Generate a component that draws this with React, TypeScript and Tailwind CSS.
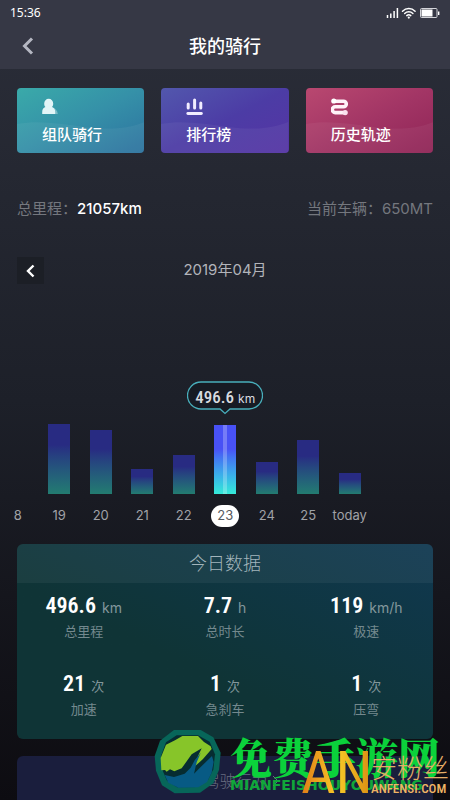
import { clsx } from "clsx";

interface Day {
  label: string;
  height: number;
  active?: boolean;
}

interface Stat {
  value: string;
  unit: string;
  label: string;
}

const days: Day[] = [
  { label: "8", height: 0 },
  { label: "19", height: 70 },
  { label: "20", height: 64 },
  { label: "21", height: 25 },
  { label: "22", height: 39 },
  { label: "23", height: 69, active: true },
  { label: "24", height: 32 },
  { label: "25", height: 54 },
  { label: "today", height: 21 },
];

const stats: Stat[] = [
  { value: "496.6", unit: "km", label: "总里程" },
  { value: "7.7", unit: "h", label: "总时长" },
  { value: "119", unit: "km/h", label: "极速" },
  { value: "21", unit: "次", label: "加速" },
  { value: "1", unit: "次", label: "急刹车" },
  { value: "1", unit: "次", label: "压弯" },
];

function StatusIcons() {
  return (
    <svg width="54" height="12" viewBox="0 0 54 12" fill="none" aria-hidden="true">
      <g stroke="#fff" strokeWidth="1.5">
        <path d="M1.500 8v3M4.800 6.500V11M8.100 4V11M11.400 1V11" />
      </g>
      <g stroke="#fff" strokeWidth="1.500" strokeLinecap="round">
        <path d="M16.500 4.200c3.600-3.500 9-3.500 12.600 0M18.700 6.500c2.300-2.200 5.900-2.200 8.200 0M20.800 8.600c1.200-1.100 2.800-1.100 4 0" />
      </g>
      <circle cx="22.800" cy="10.600" r="1.100" fill="#fff" />
      <rect x="34.500" y="1.500" width="16.500" height="9" rx="1" stroke="#d4d5da" />
      <rect x="35.500" y="2.500" width="11" height="7" fill="#fff" />
      <path d="M52.700 4.500v3.500" stroke="#fff" strokeWidth="1.400" />
    </svg>
  );
}

function TeamIcon() {
  return (
    <svg width="18" height="18" viewBox="0 0 18 18" aria-hidden="true">
      <path d="M10 9.500c3.500 .5 5.300 3 5.800 6.500H9z" fill="#fff" opacity=".35" />
      <path
        d="M6.700.8a4.500 4.500 0 0 1 4.500 4.600c0 1.400-.3 2.500-1.200 3.500 2.100.8 3.200 2.400 3.200 5V16H.2v-2.100c0-2.600 1.100-4.200 3.200-5-.9-1-1.200-2.100-1.200-3.500A4.500 4.500 0 0 1 6.700.8z"
        fill="#e2f5f7"
      />
    </svg>
  );
}

function RankIcon() {
  return (
    <svg width="18" height="18" viewBox="0 0 18 18" fill="none" stroke="#f1edff" strokeLinecap="round" aria-hidden="true">
      <path d="M2.200 6v4M8.600 2v8M14.800 5v5" strokeWidth="3" />
      <path d="M1.800 15.500h13.600" strokeWidth="2.800" />
    </svg>
  );
}

function TrackIcon() {
  return (
    <svg width="18" height="18" viewBox="0 0 18 18" fill="none" aria-hidden="true">
      <path
        d="M3 3.200h9.500a2.800 2.800 0 0 1 0 5.600H4.200a2.900 2.900 0 0 0 0 5.800H14"
        stroke="#fff2f8"
        strokeWidth="3.600"
        strokeLinecap="round"
      />
      <circle cx="2.800" cy="3" r="2.600" fill="#fff" />
      <circle cx="14.200" cy="14.600" r="2.600" fill="#fbe0ee" />
    </svg>
  );
}

const shortcuts = [
  { label: "组队骑行", icon: <TeamIcon />, bg: "from-[#3aaaa9] via-[#3590a8] to-[#2d729f]" },
  { label: "排行榜", icon: <RankIcon />, bg: "from-[#5257ad] via-[#4c3ca5] to-[#5534a4]" },
  { label: "历史轨迹", icon: <TrackIcon />, bg: "from-[#b94870] via-[#a23565] to-[#8f2456]" },
];

function Shortcut({ label, icon, bg }: (typeof shortcuts)[number]) {
  return (
    <button
      className={clsx("relative flex h-[65px] flex-col items-start overflow-hidden rounded bg-linear-to-br pt-[10px] pl-[25px] text-left", bg)}
    >
      <svg
        className="absolute inset-x-0 bottom-0 h-8 w-full"
        viewBox="0 0 128 32"
        preserveAspectRatio="none"
        aria-hidden="true"
      >
        <path d="M0 3C22-1 44 3 68 6s42 2 60-5v32H0z" fill="#fff" opacity=".05" />
      </svg>
      {icon}
      <span className="relative mt-2 text-[15px] leading-[22px] font-medium text-white">{label}</span>
    </button>
  );
}

function Bubble() {
  return (
    <div className="absolute bottom-full left-1/2 mb-[10px] h-[34px] w-[76px] -translate-x-1/2">
      <svg className="absolute inset-0" width="76" height="34" viewBox="0 0 76 34" fill="none" aria-hidden="true">
        <path
          d="M14 1h48a13.500 13.500 0 0 1 0 27H43l-5 4.500-5-4.500H14A13.500 13.500 0 0 1 14 1z"
          fill="#171b24"
          stroke="#48aebb"
          strokeWidth="1.300"
        />
      </svg>
      <div className="relative flex h-8 items-baseline justify-center gap-1 text-[#d9dce0]">
        <span className="font-['Roboto_Condensed',Roboto,sans-serif] text-[17px] leading-8 font-medium">496.6</span>
        <span className="text-[12px]">km</span>
      </div>
    </div>
  );
}

function DayColumn({ label, height, active }: Day) {
  return (
    <div className="flex flex-col items-center justify-end">
      <div
        className={clsx(
          "relative w-[22px] bg-linear-to-b",
          active ? "from-[#4851f5] from-35% to-[#35ead8]" : "from-[#282b82] from-30% to-[#237c70]",
        )}
        style={{ height }}
      >
        {active && (
          <>
            <div className="mx-auto h-full w-1 bg-white/25" />
            <Bubble />
          </>
        )}
      </div>
      <span
        className={clsx(
          "mt-[11px] flex h-[22px] items-center rounded-full text-[13px]",
          active ? "bg-white px-[6px] text-[#555a61]" : "text-[#a0a2a7]",
        )}
      >
        {label}
      </span>
    </div>
  );
}

function Watermark() {
  return (
    <div className="pointer-events-none absolute inset-x-0 bottom-0 h-[71px] overflow-hidden whitespace-nowrap">
      <svg className="absolute top-0 left-[154px]" width="68" height="66" viewBox="460 25 204 198" aria-hidden="true">
        <path
          d="M520 28h80l38 22 22 46-5 52-17 40-40 28-76 2-38-24-18-44-4-44 16-46z"
          fill="#076659"
        />
        <path d="M528 44h64l35 19 16 38-5 45-15 30-32 23-62 1-30-20-15-35-3-39 15-41z" fill="#062c31" />
        <path
          d="M545 46h47l18 18 20 13 3 8-26 30-24 22 6-24 14-30-30 18-30 42-22 9-13-6-10 7-5-5-11 1-2-37 16-40 27-13z"
          fill="#87c529"
        />
        <path
          d="M492 163l28 6 32-10 18-18 12-22 18-22-12 28-8 34 20-20 34-33 5 18-6 32-14 28-26 16-60 1-30-15z"
          fill="#075a84"
        />
      </svg>
      <div className="absolute top-0 left-[230px] font-['Noto_Serif_CJK_SC','Noto_Sans_CJK_SC',sans-serif] text-[42px] leading-[54px] font-black text-[#0bd23b]">
        免费手游网
      </div>
      <div className="absolute top-[46px] left-[230px] font-['DejaVu_Sans',sans-serif] text-[14px] leading-5 font-bold text-[#10a83a]">
        MIANFEISHOUYOUWANG
      </div>
      <div className="absolute top-[17px] left-[301px] bg-linear-to-r from-[#df7b17] via-[#f7c927] to-[#d98b12] bg-clip-text font-['Roboto_Condensed',Roboto,sans-serif] text-[60px] leading-[54px] text-transparent">
        AN
      </div>
      <div className="absolute top-[23px] left-[371px] font-['Noto_Sans_CJK_SC',sans-serif] text-[26px] leading-[30px] font-light text-[#e5ad68]">
        安粉丝
      </div>
      <div className="absolute top-[50px] left-[371px] font-['Roboto_Condensed',Roboto,sans-serif] text-[13px] leading-5 font-medium text-[#efb465]">
        ANFENSI.COM
      </div>
    </div>
  );
}

export default function App() {
  return (
    <div className="relative h-screen overflow-hidden bg-linear-to-b from-[#2b2e39] via-[#1d2029] to-[#0d0c11] font-[Inter,'Noto_Sans_CJK_SC',sans-serif]">
      <header className="h-[69px] bg-[#363845]">
        <div className="flex h-[26px] items-center justify-between px-[10px] text-white">
          <span className="font-['Noto_Sans',sans-serif] text-[12px]">15:36</span>
          <StatusIcons />
        </div>
        <div className="grid h-10 grid-cols-[1fr_auto_1fr] items-center">
          <button className="ml-4 flex size-6 items-center justify-center" aria-label="返回">
            <svg width="12" height="18" viewBox="0 0 12 18" fill="none" stroke="#b5b7c2" strokeWidth="3" aria-hidden="true">
              <path d="M10 1.500L2.500 9l7.500 7.500" />
            </svg>
          </button>
          <h1 className="text-[18px] font-medium text-white">我的骑行</h1>
        </div>
      </header>

      <main>
        <nav className="mt-[19px] grid grid-cols-3 gap-[17px] px-[17px]">
          {shortcuts.map((s) => (
            <Shortcut key={s.label} {...s} />
          ))}
        </nav>

        <div className="mt-11 flex justify-between px-[17px] text-[15px] leading-6 text-[#74777e]">
          <p>
            总里程：<span className="font-medium text-white">21057km</span>
          </p>
          <p>当前车辆：650MT</p>
        </div>

        <div className="mt-9 grid grid-cols-[1fr_auto_1fr] items-center px-[17px]">
          <button className="flex size-[27px] items-center justify-center bg-[#1c1f26]" aria-label="上个月">
            <svg width="9" height="14" viewBox="0 0 9 14" fill="none" stroke="#fff" strokeWidth="2.400" aria-hidden="true">
              <path d="M7.500 1.500L2 7l5.500 5.500" />
            </svg>
          </button>
          <h2 className="text-[15px] text-[#b2b4ba]">2019年04月</h2>
        </div>

        <section className="mt-[140px] -ml-[3px] grid w-[83%] grid-cols-9">
          {days.map((d) => (
            <DayColumn key={d.label} {...d} />
          ))}
        </section>

        <section className="mx-[17px] mt-[17px] overflow-hidden rounded-md bg-linear-to-tr from-[#0f3436] from-40% to-[#103850]">
          <h2 className="bg-white/5 text-center text-[18px] leading-[39px] font-light text-[#a3b5bc]">今日数据</h2>
          <dl className="grid grid-cols-3 gap-x-2 gap-y-7 pt-2 pb-5">
            {stats.map((s) => (
              <div key={s.label} className="flex flex-col-reverse items-center">
                <dt className="text-[13px] leading-5 text-[#74898e]">{s.label}</dt>
                <dd className="flex items-baseline gap-[6px]">
                  <span className="font-['Roboto_Condensed',Roboto,sans-serif] text-[22px] leading-[30px] font-semibold text-white">
                    {s.value}
                  </span>
                  <span className={clsx("text-[#83979c]", s.unit === "次" ? "text-[13px]" : "text-[14px]")}>{s.unit}</span>
                </dd>
              </div>
            ))}
          </dl>
        </section>

        <section className="mx-[17px] mt-[17px] rounded-md bg-[#1a1e3d] pb-20">
          <a href="#behavior" className="flex h-[50px] items-center justify-center gap-1 text-[16px] font-light text-[#686d80]">
            今日驾驶行为
            <svg width="7" height="12" viewBox="0 0 7 12" fill="none" stroke="#686d80" aria-hidden="true">
              <path d="M1 1l5 5-5 5" />
            </svg>
          </a>
        </section>
      </main>

      <Watermark />
    </div>
  );
}
